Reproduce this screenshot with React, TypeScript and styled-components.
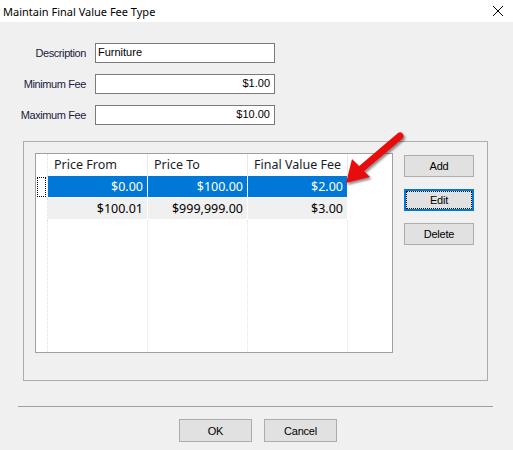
import React from 'react';
import styled, { createGlobalStyle } from 'styled-components';

const GlobalStyle = createGlobalStyle`
  html, body {
    margin: 0;
    padding: 0;
    background: #f0f0f0;
  }
  body {
    font-family: "Liberation Sans", Arial, sans-serif;
    font-size: 11px;
    color: #000;
  }
`;

interface FeeRow {
  from: string;
  to: string;
  fee: string;
}

const rows: FeeRow[] = [
  { from: '$0.00', to: '$100.00', fee: '$2.00' },
  { from: '$100.01', to: '$999,999.00', fee: '$3.00' },
];

const App: React.FC = () => {
  return (
    <Window>
      <GlobalStyle />
      <TitleBar>
        <TitleText>Maintain Final Value Fee Type</TitleText>
        <CloseIcon width="12" height="12" viewBox="0 0 12 12">
          <path d="M1 1 L11 11 M11 1 L1 11" stroke="#000" strokeWidth="1" fill="none" />
        </CloseIcon>
      </TitleBar>

      <Body>
        <Fields>
          <FieldRow>
            <Label>Description</Label>
            <TextBox>Furniture</TextBox>
          </FieldRow>
          <FieldRow>
            <Label>Minimum Fee</Label>
            <TextBox align="right">$1.00</TextBox>
          </FieldRow>
          <FieldRow>
            <Label>Maximum Fee</Label>
            <TextBox align="right">$10.00</TextBox>
          </FieldRow>
        </Fields>

        <GroupBox>
          <Grid>
            <GridRow>
              <RowHeader />
              <HeaderCell>Price From</HeaderCell>
              <HeaderCell>Price To</HeaderCell>
              <HeaderCell>Final Value Fee</HeaderCell>
              <FillerCell />
            </GridRow>
            {rows.map((r, i) => (
              <GridRow key={i}>
                <RowHeader>{i === 0 && <FocusMark />}</RowHeader>
                <Cell selected={i === 0}>{r.from}</Cell>
                <Cell selected={i === 0}>{r.to}</Cell>
                <Cell selected={i === 0}>{r.fee}</Cell>
                <FillerCell />
              </GridRow>
            ))}
            <EmptyArea>
              <RowHeader />
              <EmptyColumn />
              <EmptyColumn />
              <EmptyColumn />
              <FillerCell />
            </EmptyArea>
          </Grid>

          <SideButtons>
            <Button>Add</Button>
            <Button focused>Edit</Button>
            <Button>Delete</Button>
          </SideButtons>
        </GroupBox>

        <Separator />

        <Footer>
          <Button wide>OK</Button>
          <Button wide>Cancel</Button>
        </Footer>

        <Arrow width="70" height="64" viewBox="0 0 70 64">
          <defs>
            <filter id="shadow" x="-20%" y="-20%" width="140%" height="140%">
              <feDropShadow dx="1.5" dy="2" stdDeviation="1.2" floodColor="#000" floodOpacity="0.45" />
            </filter>
          </defs>
          <g filter="url(#shadow)">
            <path d="M57 6 L17 40" stroke="#e81010" strokeWidth="7" strokeLinecap="round" fill="none" />
            <path d="M3 53 L9 29 L27 47 Z" fill="#e81010" />
          </g>
        </Arrow>
      </Body>
    </Window>
  );
};

const Window = styled.div`
  width: 513px;
  height: 450px;
  background: #f0f0f0;
  overflow: hidden;
  display: flex;
  flex-direction: column;
`;

const TitleBar = styled.div`
  height: 22px;
  background: #fff;
  display: flex;
  align-items: center;
  justify-content: space-between;
  padding: 0 9px 0 3px;
`;

const TitleText = styled.span`
  font-family: "Noto Sans", sans-serif;
  font-size: 11px;
  color: #000;
`;

const CloseIcon = styled.svg`
  display: block;
`;

const Body = styled.div`
  position: relative;
  flex: 1;
  display: flex;
  flex-direction: column;
`;

const Fields = styled.div`
  display: flex;
  flex-direction: column;
  gap: 11px;
  padding-top: 21px;
`;

const FieldRow = styled.div`
  display: flex;
  align-items: center;
  height: 20px;
`;

const Label = styled.span`
  width: 95px;
  flex-shrink: 0;
  white-space: nowrap;
  text-align: right;
  padding-right: 9px;
  box-sizing: border-box;
  letter-spacing: -0.4px;
  color: #1a1a40;
`;

const TextBox = styled.div<{ align?: 'left' | 'right' }>`
  width: 180px;
  height: 20px;
  box-sizing: border-box;
  border: 1px solid #7a7a7a;
  background: #fff;
  padding: 0 4px 0 2px;
  line-height: 17px;
  color: #000;
  text-align: ${p => p.align || 'left'};
`;

const GroupBox = styled.div`
  margin: 16px 0 0 23px;
  width: 465px;
  height: 240px;
  box-sizing: border-box;
  border: 1px solid #adadad;
  padding: 11px;
  display: flex;
  gap: 11px;
`;

const Grid = styled.div`
  width: 358px;
  height: 200px;
  box-sizing: border-box;
  border: 1px solid #a0a0a0;
  background: #fff;
  display: flex;
  flex-direction: column;
  overflow: hidden;
  font-family: "Noto Sans", sans-serif;
  font-size: 12.5px;
`;

const GridRow = styled.div`
  display: flex;
  height: 22px;
  flex-shrink: 0;
`;

const RowHeader = styled.div`
  width: 11px;
  flex-shrink: 0;
  position: relative;
  border-right: 1px dotted #e0e0e0;
`;

const FocusMark = styled.span`
  position: absolute;
  left: 1px;
  top: 1px;
  width: 7px;
  height: 18px;
  border: 1px dotted #000;
`;

const HeaderCell = styled.div`
  width: 100px;
  flex-shrink: 0;
  box-sizing: border-box;
  padding-left: 6px;
  line-height: 22px;
  border-right: 1px solid #e8e8e8;
  color: #1a1a2a;
`;

const Cell = styled.div<{ selected?: boolean }>`
  width: 100px;
  flex-shrink: 0;
  box-sizing: border-box;
  padding-right: 4px;
  text-align: right;
  line-height: 21px;
  background: ${p => (p.selected ? '#0078d7' : '#f0f0f0')};
  color: ${p => (p.selected ? '#fff' : '#000')};
  border-right: 1px solid #fff;
  border-bottom: 1px solid #fff;
`;

const FillerCell = styled.div`
  flex: 1;
`;

const EmptyArea = styled.div`
  flex: 1;
  display: flex;
`;

const EmptyColumn = styled.div`
  width: 100px;
  flex-shrink: 0;
  box-sizing: border-box;
  border-right: 1px dotted #e4e4e4;
`;

const SideButtons = styled.div`
  display: flex;
  flex-direction: column;
  gap: 12px;
  padding-top: 2px;
`;

const Button = styled.button<{ focused?: boolean; wide?: boolean }>`
  width: ${p => (p.wide ? '73px' : '70px')};
  height: ${p => (p.wide ? '23px' : '22px')};
  box-sizing: border-box;
  background: #e1e1e1;
  border: ${p => (p.focused ? '2px solid #0078d7' : '1px solid #adadad')};
  outline: ${p => (p.focused ? '1px dotted #000' : 'none')};
  outline-offset: ${p => (p.focused ? '-3px' : '0')};
  font-family: "Liberation Sans", Arial, sans-serif;
  font-size: 11px;
  letter-spacing: -0.2px;
  color: #000;
  padding: 0;
`;

const Separator = styled.div`
  margin: 25px 20px 0 18px;
  height: 1px;
  background: #a0a0a0;
`;

const Footer = styled.div`
  display: flex;
  justify-content: center;
  gap: 12px;
  margin-top: 12px;
  padding-left: 3px;
`;

const Arrow = styled.svg`
  position: absolute;
  left: 343px;
  top: 108px;
`;

export default App;
